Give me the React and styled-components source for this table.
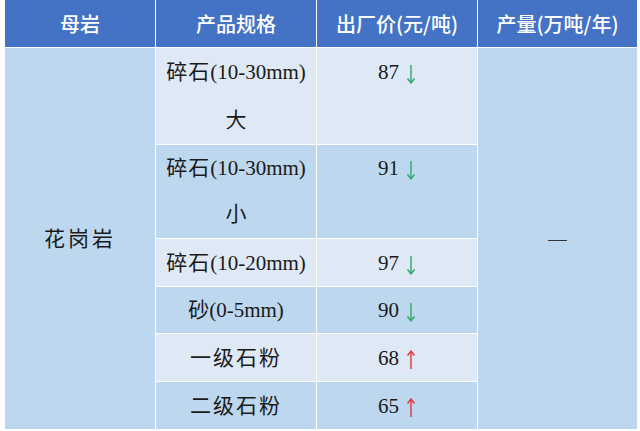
import React from 'react';
import styled, { createGlobalStyle } from 'styled-components';

const GlobalStyle = createGlobalStyle`
  html, body {
    margin: 0;
    padding: 0;
    background: #ffffff;
  }
`;

const Page = styled.div`
  padding: 0 3px 0 4px;
`;

const Table = styled.table`
  width: 633px;
  border-collapse: collapse;
  table-layout: fixed;
  font-family: "Liberation Serif", "Noto Sans CJK SC", serif;
  font-size: 21px;
  color: #1a1a1a;
`;

const HeadCell = styled.th`
  height: 47px;
  background: #4472c4;
  color: #ffffff;
  font-family: "Noto Sans CJK SC", sans-serif;
  font-weight: 500;
  font-size: 20px;
  border: 1px solid #ffffff;
  border-top: none;
  text-align: center;
  vertical-align: middle;
  padding: 0;
`;

const Cell = styled.td`
  background: ${(p) => (p.$light ? '#dee9f5' : '#bdd7ee')};
  border: 1px solid #ffffff;
  text-align: center;
  vertical-align: ${(p) => (p.$top ? 'top' : 'middle')};
  line-height: ${(p) => p.$lh || 46}px;
  height: ${(p) => p.$h}px;
  padding: 0;
`;

const Spaced = styled.span`
  letter-spacing: ${(p) => p.$ls || 2}px;
`;

const Dash = styled.span`
  display: inline-block;
  width: 19px;
  height: 1px;
  background: #333333;
  vertical-align: middle;
`;

const ArrowIcon = styled.svg`
  width: 10px;
  height: 20px;
  margin-left: 7px;
  vertical-align: -5px;
`;

const Arrow = ({ dir }) => {
  const color = dir === 'down' ? '#2fa86a' : '#e3323f';
  return (
    <ArrowIcon viewBox="0 0 10 20">
      {dir === 'down' ? (
        <>
          <line x1="5" y1="1" x2="5" y2="19" stroke={color} strokeWidth="1.4" />
          <polyline points="1.5,14.5 5,19 8.5,14.5" fill="none" stroke={color} strokeWidth="1.4" />
        </>
      ) : (
        <>
          <line x1="5" y1="1" x2="5" y2="19" stroke={color} strokeWidth="1.4" />
          <polyline points="1.5,5.5 5,1 8.5,5.5" fill="none" stroke={color} strokeWidth="1.4" />
        </>
      )}
    </ArrowIcon>
  );
};

const Price = ({ value, dir }) => (
  <>
    {value}
    <Arrow dir={dir} />
  </>
);

export default function App() {
  return (
    <Page>
      <GlobalStyle />
      <Table>
        <colgroup>
          <col style={{ width: 151 }} />
          <col style={{ width: 161 }} />
          <col style={{ width: 161 }} />
          <col style={{ width: 160 }} />
        </colgroup>
        <thead>
          <tr>
            <HeadCell>母岩</HeadCell>
            <HeadCell>产品规格</HeadCell>
            <HeadCell>出厂价(元/吨)</HeadCell>
            <HeadCell>产量(万吨/年)</HeadCell>
          </tr>
        </thead>
        <tbody>
          <tr>
            <Cell rowSpan={6}>
              <Spaced $ls={3}>花岗岩</Spaced>
            </Cell>
            <Cell $light $top $h={95} $lh={48}>
              <Spaced $ls={1}>碎石</Spaced>(10-30mm)
              <br />
              大
            </Cell>
            <Cell $light $top $h={95} $lh={48}>
              <Price value="87" dir="down" />
            </Cell>
            <Cell rowSpan={6}>
              <Dash />
            </Cell>
          </tr>
          <tr>
            <Cell $top $h={93} $lh={46}>
              <Spaced $ls={1}>碎石</Spaced>(10-30mm)
              <br />
              小
            </Cell>
            <Cell $top $h={93} $lh={46}>
              <Price value="91" dir="down" />
            </Cell>
          </tr>
          <tr>
            <Cell $light $h={47}>
              <Spaced $ls={1}>碎石</Spaced>(10-20mm)
            </Cell>
            <Cell $light $h={47}>
              <Price value="97" dir="down" />
            </Cell>
          </tr>
          <tr>
            <Cell $h={46}>砂(0-5mm)</Cell>
            <Cell $h={46}>
              <Price value="90" dir="down" />
            </Cell>
          </tr>
          <tr>
            <Cell $light $h={47}>
              <Spaced $ls={2}>一级石粉</Spaced>
            </Cell>
            <Cell $light $h={47}>
              <Price value="68" dir="up" />
            </Cell>
          </tr>
          <tr>
            <Cell $h={47}>
              <Spaced $ls={2}>二级石粉</Spaced>
            </Cell>
            <Cell $h={47}>
              <Price value="65" dir="up" />
            </Cell>
          </tr>
        </tbody>
      </Table>
    </Page>
  );
}
